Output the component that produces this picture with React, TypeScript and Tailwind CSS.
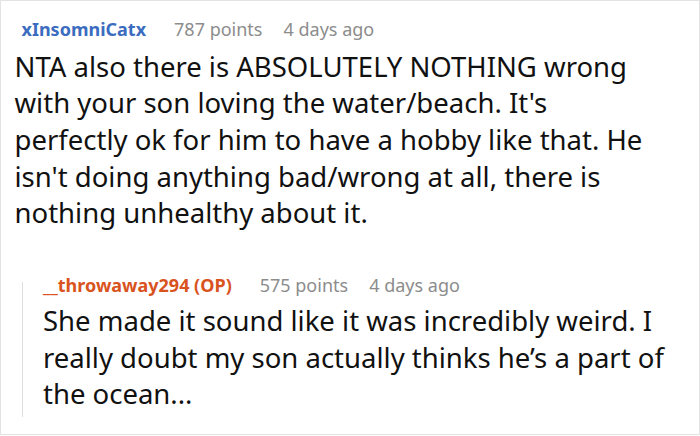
import React from 'react';

const Header: React.FC<{ user: string; points: string; time: string; userClass: string }> = ({
  user,
  points,
  time,
  userClass,
}) => (
  <div className="flex items-baseline text-[18px] leading-[24px] whitespace-nowrap">
    <span className={`font-bold mr-[28px] ${userClass}`}>{user}</span>
    <span className="text-[#8c8c8c] mr-[21px]">{points}</span>
    <span className="text-[#8c8c8c]">{time}</span>
  </div>
);

export default function App() {
  return (
    <div className="w-[700px] h-[436px] bg-white" style={{ fontFamily: '"Noto Sans", "Open Sans", sans-serif' }}>
      <div className="w-[700px] h-[435px] border-[1.5px] border-[#e3e3e3] pl-[13.5px] pt-[15.5px]">
        <div className="pl-[7px]">
          <Header user="xInsomniCatx" points="787 points" time="4 days ago" userClass="text-[#3b6cc0]" />
        </div>
        <p className="w-[648px] text-[27.5px] leading-[36.7px] text-[#111] mt-[8px]">
          NTA also there is ABSOLUTELY NOTHING wrong with your son loving the water/beach. It's perfectly ok for him to
          have a hobby like that. He isn't doing anything bad/wrong at all, there is nothing unhealthy about it.
        </p>
        <div className="flex mt-[41px] ml-[7px]">
          <div className="w-[1.5px] mt-[9px] mb-[-4px] bg-[#dedede] shrink-0" />
          <div className="pl-[20px]">
            <Header user="__throwaway294 (OP)" points="575 points" time="4 days ago" userClass="text-[#d9531e]" />
            <p className="text-[27.5px] leading-[36.7px] text-[#111] mt-[6px]">
              She made it sound like it was incredibly weird. I really doubt my son actually thinks he’s a part of the
              ocean...
            </p>
          </div>
        </div>
      </div>
    </div>
  );
}
